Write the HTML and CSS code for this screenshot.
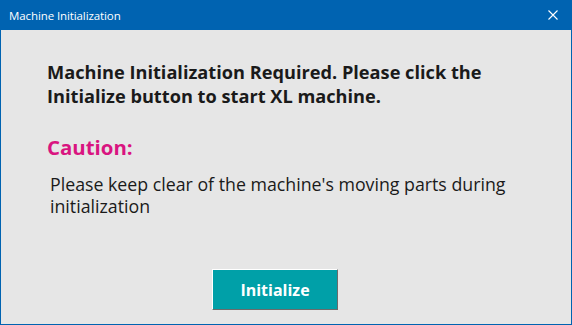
FILE: index.html
```html
<!DOCTYPE html>
<html>
<head>
<meta charset="utf-8">
<link rel="stylesheet" href="styles.css">
</head>
<body>
<div class="window">
  <div class="titlebar">
    <span class="title">Machine Initialization</span>
    <svg class="close" width="10" height="10" viewBox="0 0 10 10"><path d="M0.5 0.5 L9.5 9.5 M9.5 0.5 L0.5 9.5" stroke="#fff" stroke-width="1.1" fill="none"/></svg>
  </div>
  <div class="content">
    <p class="heading">Machine Initialization Required. Please click the Initialize button to start XL machine.</p>
    <p class="caution">Caution:</p>
    <p class="message">Please keep clear of the machine's moving parts during initialization</p>
    <div class="actions">
      <button class="btn">Initialize</button>
    </div>
  </div>
</div>
</body>
</html>
```
FILE: styles.css
```css
html, body {
  margin: 0;
  padding: 0;
}
body {
  width: 572px;
  height: 325px;
  overflow: hidden;
  font-family: "Open Sans", "DejaVu Sans", sans-serif;
}
.window {
  box-sizing: border-box;
  width: 572px;
  height: 325px;
  border: 1px solid #0063b1;
  border-top: none;
  background: #e6e6e6;
  display: flex;
  flex-direction: column;
}
.titlebar {
  height: 30px;
  margin: 0 -1px;
  background: #0063b1;
  display: flex;
  align-items: center;
  justify-content: space-between;
  padding: 0 14px 0 9px;
  flex-shrink: 0;
}
.title {
  color: #fff;
  font-size: 11.5px;
  letter-spacing: -0.1px;
}
.close {
  display: block;
}
.content {
  flex: 1;
  padding: 0 0 0 46px;
  display: flex;
  flex-direction: column;
}
.heading {
  margin: 30px 0 0 0;
  width: 500px;
  font-size: 18.2px;
  font-weight: 700;
  line-height: 24px;
  color: #1a1a1a;
}
.caution {
  margin: 26px 0 0 0;
  font-size: 20.4px;
  font-weight: 700;
  line-height: 26px;
  color: #d91480;
}
.message {
  margin: 13px 0 0 3px;
  width: 500px;
  font-size: 17.75px;
  line-height: 22px;
  color: #1a1a1a;
}
.actions {
  margin-top: auto;
  margin-bottom: 14px;
  padding-left: 165px;
}
.btn {
  box-sizing: border-box;
  width: 126px;
  height: 41px;
  background: #00a0a8;
  border: 1px solid;
  border-color: #ffffff #6b6b6b #6b6b6b #ffffff;
  color: #fff;
  font-family: "Open Sans", "DejaVu Sans", sans-serif;
  font-size: 16px;
  font-weight: 700;
  padding: 0;
}
```
